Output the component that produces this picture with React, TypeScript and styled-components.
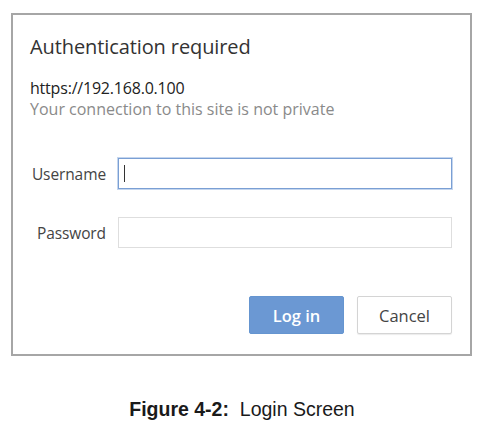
import React from "react";
import styled, { createGlobalStyle } from "styled-components";

const Global = createGlobalStyle`
  html, body { margin: 0; padding: 0; background: #fff; }
  body { width: 484px; height: 428px; overflow: hidden; }
`;

const Page = styled.div`
  width: 484px;
  height: 428px;
  box-sizing: border-box;
  padding: 13px 0 0 11px;
  display: flex;
  flex-direction: column;
`;

const Dialog = styled.div`
  width: 461px;
  height: 343px;
  box-sizing: border-box;
  border: 2px solid #a6a6a6;
  background: #fff;
  padding: 19px 17px 0 17px;
  display: flex;
  flex-direction: column;
  font-family: "Open Sans", "Noto Sans", sans-serif;
`;

const Title = styled.div`
  font-size: 20px;
  line-height: 26px;
  color: #333;
  letter-spacing: -0.1px;
`;

const Origin = styled.div`
  margin-top: 19px;
  font-size: 16px;
  line-height: 19px;
  color: #222;
  letter-spacing: -0.2px;
`;

const Note = styled.div`
  margin-top: 2px;
  font-size: 16px;
  line-height: 19px;
  color: #8a8a8a;
  letter-spacing: 0;
`;

const Form = styled.div`
  margin-top: 39px;
  display: grid;
  grid-template-columns: 76px 1fr;
  column-gap: 12px;
  row-gap: 28px;
  align-items: center;
  padding-right: 1px;
`;

const Label = styled.label`
  text-align: right;
  font-size: 15.5px;
  color: #444;
  letter-spacing: -0.1px;
`;

const Field = styled.div<{ $focused?: boolean }>`
  height: 31px;
  box-sizing: border-box;
  border: 1px solid ${(p) => (p.$focused ? "#7a9fd4" : "#dedede")};
  box-shadow: ${(p) => (p.$focused ? "0 0 0 1px #c5d6ee" : "none")};
  background: #fff;
  display: flex;
  align-items: center;
  padding-left: 5px;
`;

const Caret = styled.span`
  width: 1px;
  height: 17px;
  background: #333;
`;

const Actions = styled.div`
  margin-top: auto;
  margin-bottom: 20px;
  display: flex;
  justify-content: flex-end;
  gap: 13px;
  padding-right: 1px;
`;

const Button = styled.button<{ $primary?: boolean }>`
  width: 95px;
  height: 38px;
  box-sizing: border-box;
  border-radius: 2px;
  border: 1px solid ${(p) => (p.$primary ? "#6595d0" : "#d4d4d4")};
  background: ${(p) => (p.$primary ? "#6b98d3" : "#fff")};
  color: ${(p) => (p.$primary ? "#fff" : "#444")};
  font-family: "Open Sans", "Noto Sans", sans-serif;
  font-size: 16.5px;
  font-weight: ${(p) => (p.$primary ? 600 : 400)};
  box-shadow: ${(p) => (p.$primary ? "none" : "0 1px 1px rgba(0,0,0,0.08)")};
  padding: 0;
`;

const Caption = styled.div`
  margin-top: 42px;
  text-align: center;
  font-family: "Liberation Sans", Arial, sans-serif;
  font-size: 19.5px;
  line-height: 22px;
  color: #1a1a1a;
  width: 462px;
  white-space: pre;
`;

const Bold = styled.b`
  font-weight: 700;
`;

export default function App() {
  return (
    <>
      <Global />
      <Page>
        <Dialog>
          <Title>Authentication required</Title>
          <Origin>https://192.168.0.100</Origin>
          <Note>Your connection to this site is not private</Note>
          <Form>
            <Label>Username</Label>
            <Field $focused>
              <Caret />
            </Field>
            <Label>Password</Label>
            <Field />
          </Form>
          <Actions>
            <Button $primary>Log in</Button>
            <Button>Cancel</Button>
          </Actions>
        </Dialog>
        <Caption>
          <Bold>Figure 4-2:</Bold>{"  "}Login Screen
        </Caption>
      </Page>
    </>
  );
}
